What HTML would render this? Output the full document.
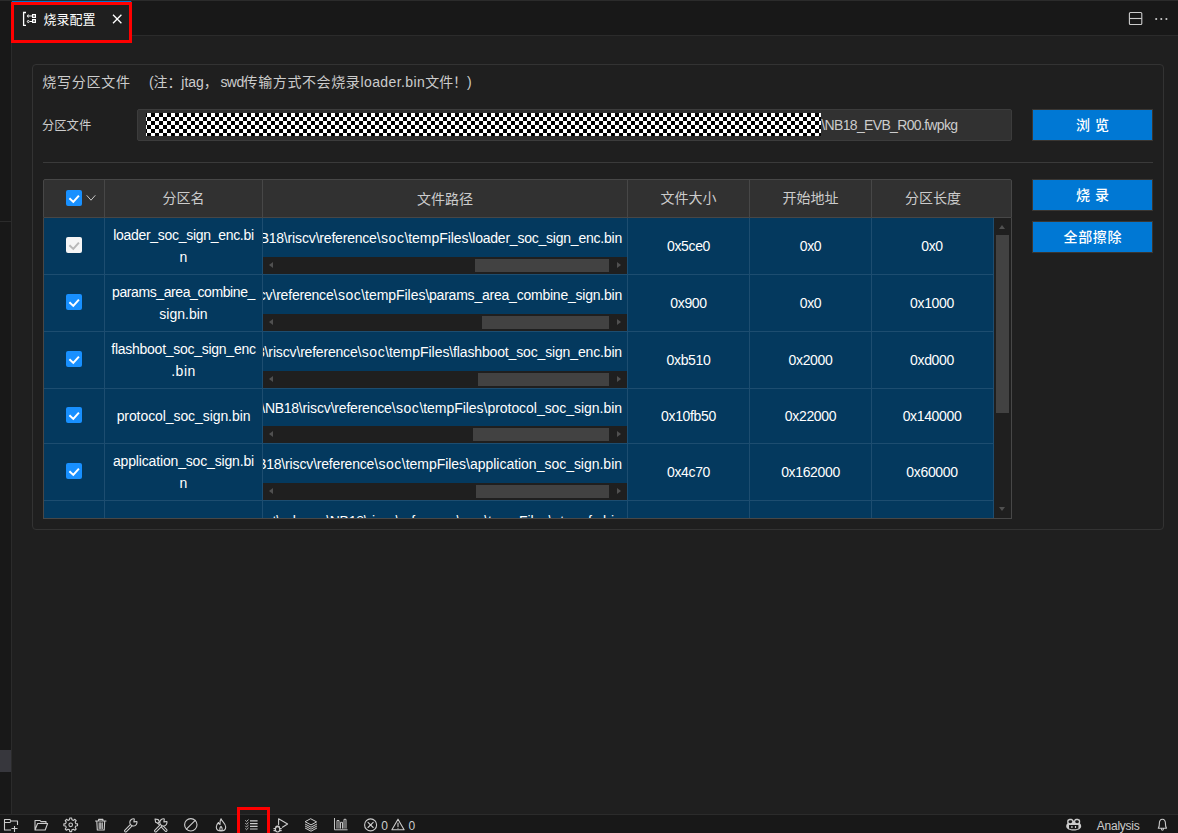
<!DOCTYPE html>
<html lang="zh-CN">
<head>
<meta charset="utf-8">
<title>烧录配置</title>
<style>
*{box-sizing:border-box;margin:0;padding:0}
html,body{width:1178px;height:833px;overflow:hidden;background:#1f1f1f}
body{position:relative;font-family:"Liberation Sans","Noto Sans CJK SC",sans-serif;color:#ccc;font-size:13px}
.abs{position:absolute}
#side{left:0;top:0;width:11px;height:814px;background:#181818}
#sideline{left:11px;top:0;width:1px;height:814px;background:#2b2b2b}
#tabs{left:12px;top:0;width:1166px;height:36px;background:#181818;border-bottom:1px solid #2b2b2b;border-top:1px solid #2b2b2b}
#tab{left:12px;top:0;width:120px;height:36px;background:#1f1f1f;border-top:1px solid #2b2b2b;border-right:1px solid #2b2b2b;box-shadow:inset 0 1px 0 #0078d4}
#tabtxt{left:43.5px;top:9.5px;font-size:13px;line-height:19px;color:#fff;white-space:nowrap}
#redtab{left:11px;top:2px;width:121px;height:41px;border:3px solid #ff0000}
#group{left:32px;top:64px;width:1132px;height:466px;border:1px solid #333;border-radius:4px}
#gtitle{left:42.3px;top:72px;font-size:14px;letter-spacing:.75px;line-height:20px;color:#ccc;white-space:nowrap}
#gnote{left:149px;top:72px;font-size:14px;letter-spacing:.6px;line-height:20px;color:#ccc;white-space:nowrap}
#flabel{left:42px;top:116.5px;font-size:12.3px;line-height:18px;color:#ccc}
#finput{left:137px;top:109px;width:875px;height:32px;background:#313131;border:1px solid #3c3c3c;border-radius:2px}
#checker{left:146px;top:113px;width:675px;height:23px;background-color:#fff;background-image:conic-gradient(#000 25%,#fff 0 50%,#000 0 75%,#fff 0);background-size:8px 8px;background-position:1px 0}
#ftxt{left:821.3px;top:115px;letter-spacing:-.66px;font-size:14px;line-height:20px;color:#ccc;white-space:nowrap}
.btn{background:#0078d4;color:#fff;font-size:14px;letter-spacing:.67px;text-indent:.67px;text-align:center;border:1px solid #3a3632;font-weight:500}
#sep{left:43px;top:162px;width:1110px;height:1px;background:#3a3a3a}
#statusbar{left:0;top:814px;width:1178px;height:22px;background:#181818;border-top:1px solid #2b2b2b}

#tbl{left:43px;top:179px;width:969px;height:340px;overflow:hidden;font-size:14px}
.th{background:#313131;border:1px solid #474747;border-radius:2px 2px 0 0}
.hv{top:1px;width:1px;height:37px;background:#474747}
.ht{top:8px;height:22px;line-height:22px;text-align:center;color:#ccc;font-size:14px}
.cb{width:16px;height:16px;background:#1890ff;border-radius:2px}
.cb.dis{background:#f5f5f5}
.cb svg{display:block}
#tbody{left:0;top:39px;width:951px;height:300px;overflow:hidden;background:#04395e;border-left:1px solid #474747}
#tbody .row{left:0;width:951px;border-bottom:1px solid #1d4d70}
.row>*{margin-left:-1px}
.bv{top:0;width:1px;height:300px;background:#1d4d70;margin-left:-1px}
.nm{left:62px;width:157px;height:22px;line-height:22px;text-align:center;color:#fff;white-space:nowrap}
.pc{left:220px;top:0;width:364px;overflow:hidden}
.pt b{font-weight:normal}
.pt{right:5px;height:22px;line-height:22px;color:#fff;white-space:nowrap}
.hs{left:220px;width:364px;height:17px;background:#1f1f1f}
.thumb{top:2px;height:13px;background:#424242}
.al{left:6px;top:5px;width:0;height:0;border:solid transparent;border-width:3.5px 4px 3.5px 0;border-right-color:#505050}
.ar{right:6px;top:5px;width:0;height:0;border:solid transparent;border-width:3.5px 0 3.5px 4px;border-left-color:#505050}
.vl{letter-spacing:-.35px;height:22px;line-height:22px;text-align:center;color:#fff;white-space:nowrap}
#vs{left:951px;top:39px;width:17px;height:300px;background:#1f1f1f}
.vthumb{left:2px;top:17px;width:13px;height:178px;background:#424242}
.au{left:5px;top:7px;width:0;height:0;border:solid transparent;border-width:0 3.5px 4px 3.5px;border-bottom-color:#505050}
.ad{left:5px;bottom:7px;width:0;height:0;border:solid transparent;border-width:4px 3.5px 0 3.5px;border-top-color:#505050}
#tblb{left:43px;top:518px;width:969px;height:1px;background:#474747}
#tblr{left:1011px;top:218px;width:1px;height:301px;background:#474747}

.st{font-size:12px;line-height:18px;color:#ccc;white-space:nowrap}
#redst{left:237px;top:807px;width:33px;height:40px;border:3px solid #ff0000}
.lt{letter-spacing:0}
</style>
</head>
<body>
<div id="side" class="abs"></div>
<div id="sideline" class="abs"></div>
<div class="abs" style="left:0;top:0;width:12px;height:1px;background:#2b2b2b"></div>
<div class="abs" style="left:0;top:221px;width:11px;height:1px;background:#2b2b2b"></div>
<div class="abs" style="left:0;top:750px;width:11px;height:22px;background:#37373d"></div>
<div id="tabs" class="abs"></div>
<div id="tab" class="abs"></div>
<div id="tabtxt" class="abs">烧录配置</div>
<div id="redtab" class="abs"></div>
<div id="group" class="abs"></div>
<div id="gtitle" class="abs">烧写分区文件</div>
<div id="gnote" class="abs"><span id="n1" style="letter-spacing:-.13px">(注：</span><span id="n2" class="lt">jtag</span><span id="n3" style="letter-spacing:2.6px">，</span><span id="n4" class="lt" style="letter-spacing:-.6px">swd</span><span id="n5">传输方式不会烧录</span><span id="n6" class="lt" style="letter-spacing:.42px">loader.bin</span><span id="n7" style="letter-spacing:-.12px">文件！)</span></div>
<div id="flabel" class="abs">分区文件</div>
<div id="finput" class="abs"></div>
<div id="checker" class="abs"></div>
<div id="ftxt" class="abs">\NB18_EVB_R00.fwpkg</div>
<div class="abs btn" style="left:1032px;top:109px;width:121px;height:32px;line-height:30px">浏 览</div>
<div id="sep" class="abs"></div>
<div class="abs btn" style="left:1032px;top:179px;width:121px;height:32px;line-height:30px">烧 录</div>
<div class="abs btn" style="left:1032px;top:221px;width:121px;height:32px;line-height:30px">全部擦除</div>
<!--TABLE-->
<div id="tbl" class="abs">
<div class="abs th" style="left:0;top:0;width:969px;height:39px"></div>
<div class="abs hv" style="left:61px"></div>
<div class="abs hv" style="left:219px"></div>
<div class="abs hv" style="left:584px"></div>
<div class="abs hv" style="left:706px"></div>
<div class="abs hv" style="left:828px"></div>
<div class="abs ht" style="left:62px;width:157px">分区名</div>
<div class="abs ht" style="left:220px;width:364px;top:9px">文件路径</div>
<div class="abs ht" style="left:585px;width:121px">文件大小</div>
<div class="abs ht" style="left:707px;width:121px">开始地址</div>
<div class="abs ht" style="left:829px;width:122px">分区长度</div>
<div class="abs cb" style="left:23px;top:11px"><svg width="16" height="16" viewBox="0 0 16 16"><path d="M3.4 8.3 L7.3 11.9 L12.9 5.7" fill="none" stroke="#fff" stroke-width="2"/></svg></div>
<svg class="abs" style="left:43px;top:15px" width="10" height="7" viewBox="0 0 10 7"><path d="M0.7 1.3 L5 6.2 L9.3 1.3" fill="none" stroke="#c8c8c8" stroke-width="1"/></svg>
<div id="tbody" class="abs">
<div class="abs row" style="top:0px;height:57px">
<div class="abs cb dis" style="left:23px;top:19px"><svg width="16" height="16" viewBox="0 0 16 16"><path d="M3.4 8.3 L7.3 11.9 L12.9 5.7" fill="none" stroke="#b8b8b8" stroke-width="2"/></svg></div>
<div class="abs nm" style="top:6px;letter-spacing:-0.3px">loader_soc_sign_enc.bi</div>
<div class="abs nm" style="top:28px">n</div>
<div class="abs pc" style="height:39px"><span class="abs pt" style="top:9px">D:\workspace\fbb_project\output\release<b style="letter-spacing:-.28px">\NB18</b><b style="letter-spacing:-.14px">\riscv</b><b style="letter-spacing:-.2px">\reference</b><b style="letter-spacing:.5px">\soc</b><b style="letter-spacing:-.04px">\tempFiles</b><b style="letter-spacing:-0.224px">\loader_soc_sign_enc.bin</b></span></div>
<div class="abs hs" style="top:39px"><i class="abs al"></i><i class="abs thumb" style="left:212px;width:134px"></i><i class="abs ar"></i></div>
<div class="abs vl" style="left:585px;width:121px;top:17px">0x5ce0</div>
<div class="abs vl" style="left:707px;width:121px;top:17px">0x0</div>
<div class="abs vl" style="left:828px;width:122px;top:17px">0x0</div>
</div>
<div class="abs row" style="top:57px;height:57px">
<div class="abs cb" style="left:23px;top:19px"><svg width="16" height="16" viewBox="0 0 16 16"><path d="M3.4 8.3 L7.3 11.9 L12.9 5.7" fill="none" stroke="#fff" stroke-width="2"/></svg></div>
<div class="abs nm" style="top:6px;letter-spacing:-0.4px">params_area_combine_</div>
<div class="abs nm" style="top:28px">sign.bin</div>
<div class="abs pc" style="height:39px"><span class="abs pt" style="top:9px">D:\workspace\fbb_project\output\release<b style="letter-spacing:-.28px">\NB18</b><b style="letter-spacing:-.14px">\riscv</b><b style="letter-spacing:-.2px">\reference</b><b style="letter-spacing:.5px">\soc</b><b style="letter-spacing:-.04px">\tempFiles</b><b style="letter-spacing:-0.225px">\params_area_combine_sign.bin</b></span></div>
<div class="abs hs" style="top:39px"><i class="abs al"></i><i class="abs thumb" style="left:219px;width:127px"></i><i class="abs ar"></i></div>
<div class="abs vl" style="left:585px;width:121px;top:17px">0x900</div>
<div class="abs vl" style="left:707px;width:121px;top:17px">0x0</div>
<div class="abs vl" style="left:828px;width:122px;top:17px">0x1000</div>
</div>
<div class="abs row" style="top:114px;height:57px">
<div class="abs cb" style="left:23px;top:19px"><svg width="16" height="16" viewBox="0 0 16 16"><path d="M3.4 8.3 L7.3 11.9 L12.9 5.7" fill="none" stroke="#fff" stroke-width="2"/></svg></div>
<div class="abs nm" style="top:6px;letter-spacing:-0.27px">flashboot_soc_sign_enc</div>
<div class="abs nm" style="top:28px;letter-spacing:0.5px">.bin</div>
<div class="abs pc" style="height:39px"><span class="abs pt" style="top:9px">D:\workspace\fbb_project\output\release<b style="letter-spacing:-.28px">\NB18</b><b style="letter-spacing:-.14px">\riscv</b><b style="letter-spacing:-.2px">\reference</b><b style="letter-spacing:.5px">\soc</b><b style="letter-spacing:-.04px">\tempFiles</b><b style="letter-spacing:-0.15px">\flashboot_soc_sign_enc.bin</b></span></div>
<div class="abs hs" style="top:39px"><i class="abs al"></i><i class="abs thumb" style="left:215px;width:131px"></i><i class="abs ar"></i></div>
<div class="abs vl" style="left:585px;width:121px;top:17px">0xb510</div>
<div class="abs vl" style="left:707px;width:121px;top:17px">0x2000</div>
<div class="abs vl" style="left:828px;width:122px;top:17px">0xd000</div>
</div>
<div class="abs row" style="top:171px;height:55px">
<div class="abs cb" style="left:23px;top:18px"><svg width="16" height="16" viewBox="0 0 16 16"><path d="M3.4 8.3 L7.3 11.9 L12.9 5.7" fill="none" stroke="#fff" stroke-width="2"/></svg></div>
<div class="abs nm" style="top:16px;letter-spacing:-0.08px">protocol_soc_sign.bin</div>
<div class="abs pc" style="height:37px"><span class="abs pt" style="top:8px">D:\workspace\fbb_project\output\release<b style="letter-spacing:-.28px">\NB18</b><b style="letter-spacing:-.14px">\riscv</b><b style="letter-spacing:-.2px">\reference</b><b style="letter-spacing:.5px">\soc</b><b style="letter-spacing:-.04px">\tempFiles</b><b style="letter-spacing:-0.04px">\protocol_soc_sign.bin</b></span></div>
<div class="abs hs" style="top:37px"><i class="abs al"></i><i class="abs thumb" style="left:210px;width:136px"></i><i class="abs ar"></i></div>
<div class="abs vl" style="left:585px;width:121px;top:16px">0x10fb50</div>
<div class="abs vl" style="left:707px;width:121px;top:16px">0x22000</div>
<div class="abs vl" style="left:828px;width:122px;top:16px">0x140000</div>
</div>
<div class="abs row" style="top:226px;height:57px">
<div class="abs cb" style="left:23px;top:19px"><svg width="16" height="16" viewBox="0 0 16 16"><path d="M3.4 8.3 L7.3 11.9 L12.9 5.7" fill="none" stroke="#fff" stroke-width="2"/></svg></div>
<div class="abs nm" style="top:6px;letter-spacing:-0.16px">application_soc_sign.bi</div>
<div class="abs nm" style="top:28px">n</div>
<div class="abs pc" style="height:39px"><span class="abs pt" style="top:9px">D:\workspace\fbb_project\output\release<b style="letter-spacing:-.28px">\NB18</b><b style="letter-spacing:-.14px">\riscv</b><b style="letter-spacing:-.2px">\reference</b><b style="letter-spacing:.5px">\soc</b><b style="letter-spacing:-.04px">\tempFiles</b><b style="letter-spacing:-0.02px">\application_soc_sign.bin</b></span></div>
<div class="abs hs" style="top:39px"><i class="abs al"></i><i class="abs thumb" style="left:213px;width:133px"></i><i class="abs ar"></i></div>
<div class="abs vl" style="left:585px;width:121px;top:17px">0x4c70</div>
<div class="abs vl" style="left:707px;width:121px;top:17px">0x162000</div>
<div class="abs vl" style="left:828px;width:122px;top:17px">0x60000</div>
</div>
<div class="abs row" style="top:283px;height:55px">
<div class="abs cb" style="left:23px;top:18px"><svg width="16" height="16" viewBox="0 0 16 16"><path d="M3.4 8.3 L7.3 11.9 L12.9 5.7" fill="none" stroke="#fff" stroke-width="2"/></svg></div>
<div class="abs nm" style="top:16px">otp_efs.bin</div>
<div class="abs pc" style="height:37px"><span class="abs pt" style="top:8.5px">D:\workspace\fbb_project\output\release<b style="letter-spacing:-.28px">\NB18</b><b style="letter-spacing:-.14px">\riscv</b><b style="letter-spacing:-.2px">\reference</b><b style="letter-spacing:.5px">\soc</b><b style="letter-spacing:-.04px">\tempFiles</b><b style="letter-spacing:0.1px">\otp_efs.bin</b></span></div>
<div class="abs hs" style="top:37px"><i class="abs al"></i><i class="abs thumb" style="left:237px;width:109px"></i><i class="abs ar"></i></div>
<div class="abs vl" style="left:585px;width:121px;top:16px">0x2000</div>
<div class="abs vl" style="left:707px;width:121px;top:16px">0x1c2000</div>
<div class="abs vl" style="left:828px;width:122px;top:16px">0x4000</div>
</div>
<div class="abs bv" style="left:61px"></div>
<div class="abs bv" style="left:219px"></div>
<div class="abs bv" style="left:584px"></div>
<div class="abs bv" style="left:706px"></div>
<div class="abs bv" style="left:828px"></div>
<div class="abs bv" style="left:950px"></div>
</div>
<div id="vs" class="abs"><i class="abs au"></i><i class="abs vthumb"></i><i class="abs ad"></i></div>
</div>
<div id="tblb" class="abs"></div><div id="tblr" class="abs"></div>
<!--/TABLE-->
<div id="statusbar" class="abs"></div>
<!--STATUS-->
<svg class="abs" style="left:0;top:815px" width="1178" height="18" viewBox="0 815 1178 18" fill="none" stroke="#ccc" stroke-width="1.1" stroke-linejoin="round" stroke-linecap="round">
<path d="M11 830H4.5V819.5H10L11 821H17.5V825M4.5 822.5H10L11 821M14.5 826V832M11.5 828.5H17.5" stroke-linecap="butt"/>
<path d="M35 830V820.5H40L41 821.6H46V823.5M35 830L37.6 823.5H47.6L45.2 830Z"/>
<path d="M69.78 817.96 L71.62 817.96 L71.91 819.74 L73.42 820.37 L74.89 819.31 L76.19 820.61 L75.13 822.08 L75.76 823.59 L77.54 823.88 L77.54 825.72 L75.76 826.01 L75.13 827.52 L76.19 828.99 L74.89 830.29 L73.42 829.23 L71.91 829.86 L71.62 831.64 L69.78 831.64 L69.49 829.86 L67.98 829.23 L66.51 830.29 L65.21 828.99 L66.27 827.52 L65.64 826.01 L63.86 825.72 L63.86 823.88 L65.64 823.59 L66.27 822.08 L65.21 820.61 L66.51 819.31 L67.98 820.37 L69.49 819.74 Z"/><circle cx="70.7" cy="824.8" r="1.8"/>
<path d="M95.5 821H106M98.6 821V819.4H102.9V821M96.8 821.2L97.3 830H104.2L104.7 821.2M99.2 822.8V828.4M100.75 822.8V828.4M102.3 822.8V828.4"/>
<g><path d="M131.3 825.2L125.7 830.8" stroke-width="3.3"/><path d="M131.3 825.2L125.7 830.8" stroke="#181818" stroke-width="1.2"/><path d="M134.33 818.92L133.90 821.9L136.88 821.47A3.6 3.6 0 1 1 134.33 818.92Z" fill="#181818"/></g>
<g><path d="M157.2 821.2L166 830.3" stroke-width="3.1"/><path d="M157.2 821.2L166 830.3" stroke="#181818" stroke-width="1.1"/><path d="M155 819L158.2 819.6L159.4 822L157.8 823.2L155.6 822.2Z" fill="#181818"/><path d="M161.3 825.2L155.7 830.8" stroke-width="3.3"/><path d="M161.3 825.2L155.7 830.8" stroke="#181818" stroke-width="1.2"/><path d="M164.33 818.92L163.90 821.9L166.88 821.47A3.6 3.6 0 1 1 164.33 818.92Z" fill="#181818"/></g>
<circle cx="190.8" cy="824.8" r="6.2"/><path d="M186.4 829.2L195.2 820.4"/>
<path d="M221 818.8C222 821.6 225.7 823.2 225.7 827C225.7 829.5 223.7 831 221 831C218.3 831 216.3 829.3 216.3 827C216.3 825 217.4 823.6 218.5 822.5C218.7 823.7 219.2 824.3 220 824.5C219.8 822.5 220 820.5 221 818.8ZM221 831C219.4 830.4 219.4 828.4 221 826.4C222.6 828.4 222.6 830.4 221 831Z"/>
<path d="M250 820.8H257.6M250 823.6H257.6M250 826.3H257.6M250 829H257.6" stroke-width="1.15" stroke-linecap="butt"/><path d="M245.6 820.6L246.5 821.5L248.2 819.9M245.6 823.4L246.5 824.3L248.2 822.7M245.6 826.1L246.5 827L248.2 825.4M245.6 828.8L246.5 829.7L248.2 828.1" stroke-width="0.9"/>
<path d="M278.6 824.6V818.8L287.6 824L282.4 827.2"/><ellipse cx="277.6" cy="829.3" rx="2.2" ry="2.7"/><path d="M275.9 826.8C276.3 825.7 278.9 825.7 279.3 826.8M275.3 828.6H273.9M275.3 830.6H273.9M279.9 828.6H281.3M279.9 830.6H281.3"/>
<path d="M311 818.9L316.6 821.9L311 824.9L305.4 821.9ZM305.4 824.2L311 827.2L316.6 824.2M305.4 826.2L311 829.2L316.6 826.2M305.4 828.2L311 831.2L316.6 828.2" stroke-width="1"/>
<path d="M334.5 818V829.8H347.6M337 828.6V820.5H339V828.6M340.5 828.6V822.3H342.5V828.6M344 828.6V819.3H346V828.6" stroke-linecap="butt" stroke-width="0.95"/>
<circle cx="370.6" cy="824.9" r="6"/><path d="M368 822.3L373.2 827.5M373.2 822.3L368 827.5"/>
<path d="M398 819.2L404.1 829.7H391.9ZM398 823V826.6M398 828.2V828.3"/>
<g stroke="none" fill="#ccc"><path fill-rule="evenodd" d="M1068.6 819.2C1066.9 819.2 1067 822 1067.4 823.4C1066.6 824.2 1066.2 825 1066.2 826.2C1066.2 829 1070 830.4 1073.7 830.4C1077.400 830.4 1081.2 829 1081.2 826.200C1081.2 825 1080.8 824.2 1080 823.400C1080.400 822 1080.500 819.200 1078.800 819.200C1077.400 818.600 1074.800 818.700 1074.200 820.400H1073.200C1072.600 818.700 1070 818.600 1068.600 819.200ZM1069.300 820.500C1070.600 820.100 1072.200 820.300 1072.200 821.500C1072.200 822.700 1071.400 823.200 1070.300 823.200C1069.200 823.200 1068.500 822.900 1068.500 821.800C1068.500 821.200 1068.700 820.700 1069.300 820.500ZM1078.100 820.500C1076.800 820.100 1075.200 820.300 1075.200 821.500C1075.200 822.700 1076 823.200 1077.100 823.200C1078.200 823.200 1078.900 822.900 1078.900 821.800C1078.900 821.200 1078.700 820.700 1078.100 820.500ZM1069 825H1078.400V828.400C1077 829 1075.400 829.200 1073.700 829.200C1072 829.200 1070.400 829 1069 828.400ZM1071.300 825.900H1072.500V828H1071.300ZM1074.900 825.900H1076.100V828H1074.900Z"/></g>
<path d="M1158.300 828.200C1159.200 827.200 1159.300 826.200 1159.300 824.200C1159.300 821 1160.700 819.200 1162.400 819.200C1164.100 819.200 1165.500 821 1165.500 824.200C1165.500 826.200 1165.600 827.200 1166.500 828.200ZM1161.400 829C1161.500 830.600 1163.300 830.600 1163.400 829"/>
</svg>
<div class="abs st" style="left:381.3px;top:817px">0</div><div class="abs st" style="left:408.4px;top:817px">0</div>
<div class="abs st" style="left:1096.8px;top:817px;letter-spacing:-.25px">Analysis</div>
<div id="redst" class="abs"></div>
<svg class="abs" style="left:12px;top:4px" width="120" height="30" viewBox="12 4 120 30" fill="none" stroke="#fff" stroke-linecap="butt">
<path d="M26 12.500H23.600V25.300H26" stroke-width="1.300"/>
<circle cx="28.3" cy="16" r="1" stroke-width="1"/><circle cx="28.3" cy="21.5" r="1" stroke-width="1"/>
<path d="M29.800 16H32M29.800 21.500H32" stroke-width="1.100"/>
<rect x="32.625" y="14.625" width="2.75" height="2.75" stroke-width="1.25"/><rect x="32.625" y="19.625" width="2.75" height="2.75" stroke-width="1.25"/>
<path d="M113 14.800L121.400 23.200M121.400 14.800L113 23.200" stroke-width="1.300"/>
</svg>
<svg class="abs" style="left:1120px;top:8px" width="58" height="22" viewBox="1120 8 58 22" fill="none" stroke="#ccc" stroke-width="1.100">
<rect x="1129.400" y="12.500" width="12.400" height="12" rx="1"/><path d="M1129.400 18.500H1141.800"/>
<g fill="#ccc" stroke="none"><circle cx="1156.200" cy="19" r="1.050"/><circle cx="1161.300" cy="19" r="1.050"/><circle cx="1166.400" cy="19" r="1.050"/></g>
</svg>
<!--/STATUS-->
</body>
</html>
